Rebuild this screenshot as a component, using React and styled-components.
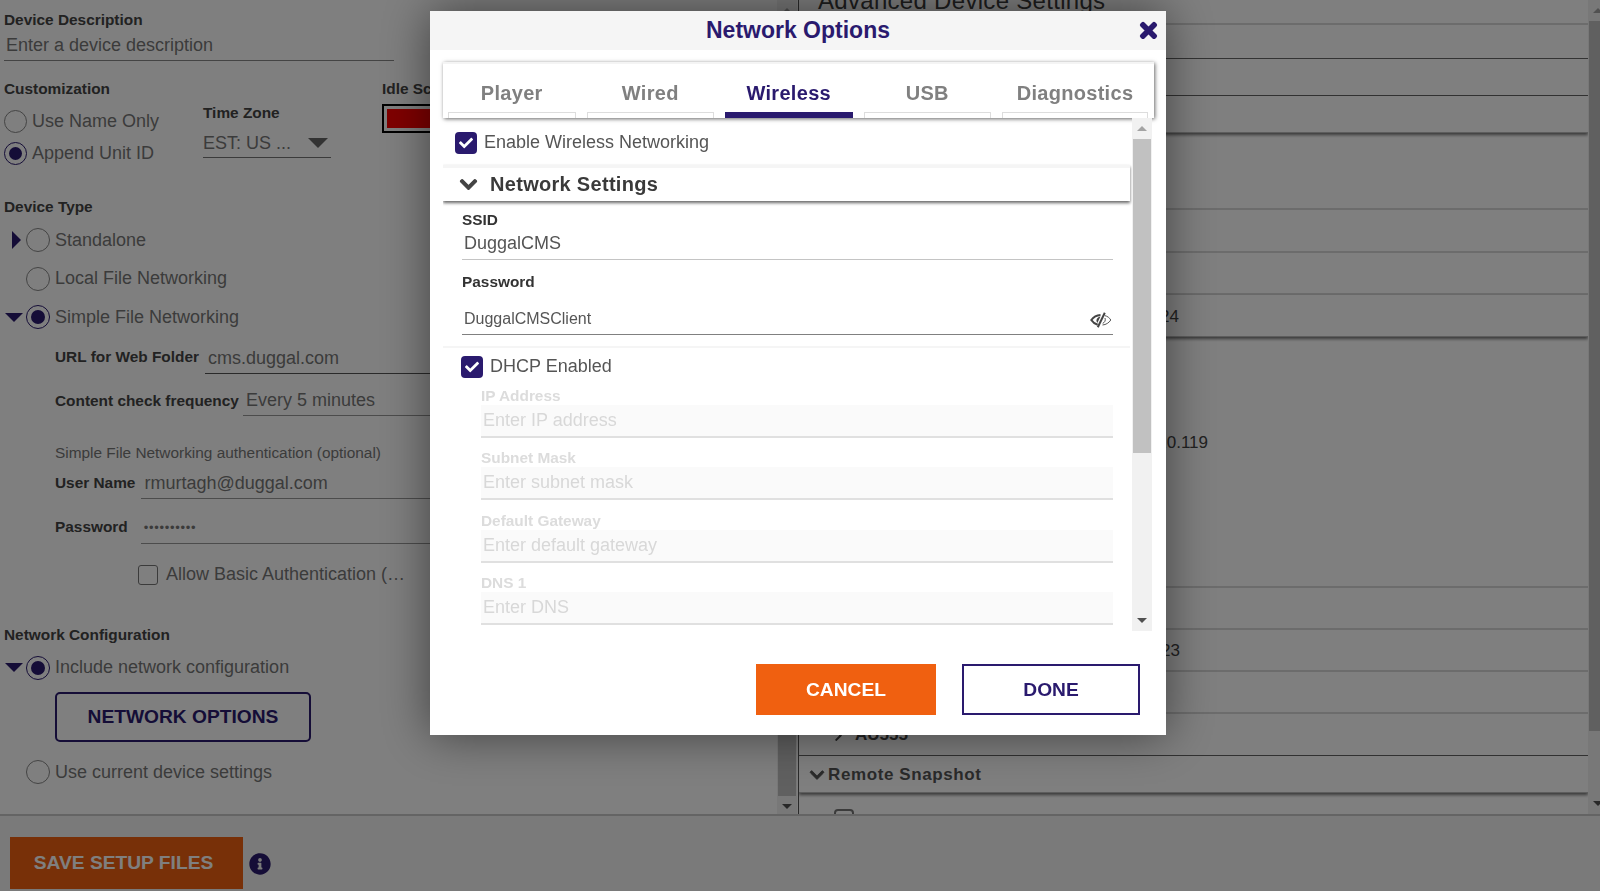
import React from 'react'
import styled, { createGlobalStyle, css } from 'styled-components'
import { FaCheck, FaChevronDown, FaChevronRight, FaInfoCircle, FaTimes } from 'react-icons/fa'

const navy = '#2a1a6e'

const GlobalStyle = createGlobalStyle`
  html, body {
    margin: 0;
    height: 100%;
    overflow: hidden;
    background: #fff;
    font-family: "Liberation Sans", Arial, sans-serif;
  }
  * { box-sizing: border-box; }
`

function Scrollbar({ thumbHeight }) {
    return (
        <Track>
            <ArrowCell><UpArrow /></ArrowCell>
            <Thumb $height={thumbHeight} />
            <TrackRest />
            <ArrowCell><DownArrow /></ArrowCell>
        </Track>
    )
}

function RadioRow({ checked, caret, label, compact }) {
    return (
        <RadioLine $compact={compact}>
            {!compact && <CaretCell>{caret === 'right' && <CaretRight />}{caret === 'down' && <CaretDown />}</CaretCell>}
            <Radio $checked={checked} $compact={compact} />
            <RadioText>{label}</RadioText>
        </RadioLine>
    )
}

function EyeSlash() {
    return (
        <EyeIcon viewBox="0 0 22 16" fill="none">
            <path d="M10.500 3C6.500 3.200 3.300 5.200 1.300 8c1.400 2.200 3.600 3.900 6.400 4.800" stroke="#444" strokeWidth="2" />
            <path d="M10.500 4.500C8 5 6.500 6.500 6.500 8.500c0 1 .3 1.800.8 2.500z" fill="#444" />
            <path d="M14.800 .8 7.800 15.200" stroke="#444" strokeWidth="2" />
            <path d="M14.800 3.600c2.700.6 4.700 2.200 6 4.400-1.900 2.900-4.800 4.700-8.300 5" stroke="#555" strokeWidth="1" />
            <path d="M15 6c.8 2.400-.2 4.500-2.300 5.300" stroke="#555" strokeWidth="1" />
        </EyeIcon>
    )
}

function DisabledField({ label, placeholder }) {
    return (
        <DisabledBlock>
            <DisabledLabel>{label}</DisabledLabel>
            <DisabledInput>{placeholder}</DisabledInput>
        </DisabledBlock>
    )
}

const rightRows = [
    { height: 39, line: 'light', heading: 'Advanced Device Settings' },
    { height: 34, line: 'dark' },
    { height: 37, line: 'dark' },
    { height: 37, line: 'shadow' },
    { height: 77, line: 'light' },
    { height: 43, line: 'light' },
    { height: 42, line: 'light' },
    { height: 42, line: 'shadow', value: '8.5.24', valueWidth: 380 },
    { height: 251, line: 'light', value: '192.168.10.119', valueWidth: 409, valueTop: 96 },
    { height: 42, line: 'light' },
    { height: 42, line: 'light', value: '8.0.123', valueWidth: 381, valueTop: 11 },
    { height: 42, line: 'light' },
    { height: 42, line: 'dark', sub: 'AU555' },
    { height: 37, line: 'shadow', section: 'Remote Snapshot' },
]

export default function App() {
    return (
        <>
            <GlobalStyle />
            <Page>
                <Main>
                    <LeftPane>
                        <LeftContent>
                            <Label $top={11}>Device Description</Label>
                            <TextInput $width={390}>Enter a device description</TextInput>

                            <CustomRow>
                                <CustomCol>
                                    <Label>Customization</Label>
                                    <RadioStack>
                                        <RadioRow compact label="Use Name Only" />
                                        <RadioRow compact checked label="Append Unit ID" />
                                    </RadioStack>
                                </CustomCol>
                                <ZoneCol>
                                    <Label>Time Zone</Label>
                                    <ZoneSelect>EST: US ...<SelectCaret /></ZoneSelect>
                                </ZoneCol>
                                <IdleCol>
                                    <IdleLabel>Idle Screen Color</IdleLabel>
                                    <Swatch />
                                </IdleCol>
                            </CustomRow>

                            <Label $top={28}>Device Type</Label>
                            <RadioStack $top={5}>
                                <RadioRow caret="right" label="Standalone" />
                                <RadioRow label="Local File Networking" />
                                <RadioRow checked caret="down" label="Simple File Networking" />
                            </RadioStack>

                            <FieldRow $top={6}>
                                <FieldLabel>URL for Web Folder</FieldLabel>
                                <FieldValue $dark $gap={6}>cms.duggal.com</FieldValue>
                            </FieldRow>
                            <FieldRow $top={11}>
                                <FieldLabel $shift={2}>Content check frequency</FieldLabel>
                                <FieldValue $gap={4}>Every 5 minutes</FieldValue>
                            </FieldRow>
                            <AuthNote>Simple File Networking authentication (optional)</AuthNote>
                            <FieldRow $top={5}>
                                <FieldLabel $shift={1}>User Name</FieldLabel>
                                <FieldValue $gap={6}>rmurtagh@duggal.com</FieldValue>
                            </FieldRow>
                            <FieldRow $top={14}>
                                <FieldLabel>Password</FieldLabel>
                                <FieldValue $gap={13} $dots>••••••••••</FieldValue>
                            </FieldRow>
                            <BasicAuth>
                                <EmptyBox />
                                <RadioText>Allow Basic Authentication (…</RadioText>
                            </BasicAuth>

                            <Label $top={40}>Network Configuration</Label>
                            <RadioStack $top={5}>
                                <RadioRow checked caret="down" label="Include network configuration" />
                            </RadioStack>
                            <NetworkButton>NETWORK OPTIONS</NetworkButton>
                            <RadioStack $top={11}>
                                <RadioRow label="Use current device settings" />
                            </RadioStack>
                        </LeftContent>
                        <Scrollbar thumbHeight={775} />
                    </LeftPane>

                    <RightPane>
                        <RightContent>
                            {rightRows.map((row, i) => (
                                <RightRow key={i} $height={row.height} $line={row.line}>
                                    {row.heading && <RightHeading>{row.heading}</RightHeading>}
                                    {row.value && <RowValue $top={row.valueTop} $width={row.valueWidth}>{row.value}</RowValue>}
                                    {row.sub && <SubRow><FaChevronRight size={13} />{row.sub}</SubRow>}
                                    {row.section && <SectionRow><FaChevronDown size={16} stroke="currentColor" strokeWidth={30} />{row.section}</SectionRow>}
                                </RightRow>
                            ))}
                            <PeekBox />
                        </RightContent>
                        <Scrollbar thumbHeight={710} />
                    </RightPane>
                </Main>
                <Footer>
                    <SaveButton>SAVE SETUP FILES</SaveButton>
                    <InfoIcon><FaInfoCircle size={22} /></InfoIcon>
                </Footer>
            </Page>

            <Backdrop>
                <Modal>
                    <ModalHeader>
                        <ModalTitle>Network Options</ModalTitle>
                        <CloseIcon><FaTimes size={23} stroke="currentColor" strokeWidth={30} /></CloseIcon>
                    </ModalHeader>
                    <TabBar>
                        <Tab>Player</Tab>
                        <Tab>Wired</Tab>
                        <Tab $active>Wireless</Tab>
                        <Tab>USB</Tab>
                        <Tab $wide>Diagnostics</Tab>
                    </TabBar>
                    <ScrollArea>
                        <ScrollBody>
                            <CheckRow $left={12} $height={47}>
                                <CheckBox><FaCheck size={14} /></CheckBox>
                                Enable Wireless Networking
                            </CheckRow>
                            <SettingsHeader>
                                <FaChevronDown size={19} stroke="currentColor" strokeWidth={30} />
                                <span>Network Settings</span>
                            </SettingsHeader>
                            <FormBlock>
                                <SmallLabel $top={11}>SSID</SmallLabel>
                                <WifiInput $line="#c4c4c4" $height={32}>DuggalCMS</WifiInput>
                                <SmallLabel $top={14}>Password</SmallLabel>
                                <WifiInput $line="#808080" $height={45} $small>
                                    DuggalCMSClient
                                    <EyeSlash />
                                </WifiInput>
                            </FormBlock>
                            <Rule />
                            <CheckRow $left={18} $height={35}>
                                <CheckBox><FaCheck size={14} /></CheckBox>
                                DHCP Enabled
                            </CheckRow>
                            <DisabledField label="IP Address" placeholder="Enter IP address" />
                            <DisabledField label="Subnet Mask" placeholder="Enter subnet mask" />
                            <DisabledField label="Default Gateway" placeholder="Enter default gateway" />
                            <DisabledField label="DNS 1" placeholder="Enter DNS" />
                        </ScrollBody>
                        <Scrollbar thumbHeight={314} />
                    </ScrollArea>
                    <ModalActions>
                        <CancelButton>CANCEL</CancelButton>
                        <DoneButton>DONE</DoneButton>
                    </ModalActions>
                </Modal>
            </Backdrop>
        </>
    )
}

const Page = styled.div`
    width: 1608px;
    height: 891px;
    display: flex;
    flex-direction: column;
    background: #fff;
    color: #777;
`
const Main = styled.div`
    height: 816px;
    display: flex;
    border-bottom: 2px solid #c8c8c8;
`
const LeftPane = styled.div`
    width: 799px;
    display: flex;
    border-right: 1px solid #555;
`
const LeftContent = styled.div`
    width: 777px;
    padding-left: 4px;
    overflow: hidden;
`
const RightPane = styled.div`
    flex: 1;
    display: flex;
    min-width: 0;
`
const RightContent = styled.div`
    width: 791px;
    overflow: hidden;
    margin-top: -14px;
`
const RightRow = styled.div`
    position: relative;
    height: ${p => p.$height}px;
    ${p => p.$line === 'light' && css`border-bottom: 2px solid #d8d8d8;`}
    ${p => p.$line === 'dark' && css`border-bottom: 1px solid #666;`}
    ${p => p.$line === 'shadow' && css`
        border-bottom: 1px solid #bbb;
        box-shadow: 0 2px 3px rgba(0, 0, 0, .55);
    `}
`
const RightHeading = styled.div`
    padding: 1px 0 0 19px;
    font-size: 24px;
    letter-spacing: .3px;
    color: #3c3c3c;
`
const RowValue = styled.div`
    width: ${p => p.$width}px;
    padding-top: ${p => (p.$top ? p.$top : 12)}px;
    text-align: right;
    font-size: 17px;
    color: #444;
`
const SubRow = styled.div`
    display: flex;
    align-items: center;
    gap: 10px;
    padding: 11px 0 0 33px;
    font-size: 17px;
    font-weight: 700;
    color: #444;
`
const SectionRow = styled.div`
    display: flex;
    align-items: center;
    gap: 3px;
    padding: 9px 0 0 10px;
    font-size: 17px;
    font-weight: 700;
    letter-spacing: .6px;
    color: #555;
`
const PeekBox = styled.div`
    width: 20px;
    height: 18px;
    margin: 16px 0 0 35px;
    border: 2px solid #777;
    border-radius: 4px;
`

const Track = styled.div`
    width: 20px;
    flex-shrink: 0;
    display: flex;
    flex-direction: column;
    align-items: center;
    background: #f1f1f1;
`
const ArrowCell = styled.div`
    height: 21px;
    flex-shrink: 0;
    display: flex;
    align-items: center;
    justify-content: center;
`
const UpArrow = styled.div`
    border-left: 5px solid transparent;
    border-right: 5px solid transparent;
    border-bottom: 5px solid #a3a3a3;
`
const DownArrow = styled.div`
    border-left: 5px solid transparent;
    border-right: 5px solid transparent;
    border-top: 5px solid #505050;
`
const Thumb = styled.div`
    width: 18px;
    height: ${p => p.$height}px;
    flex-shrink: 0;
    background: #c1c1c1;
`
const TrackRest = styled.div`flex: 1;`

const Label = styled.div`
    margin-top: ${p => p.$top || 0}px;
    height: 18px;
    line-height: 18px;
    font-size: 15.400px;
    font-weight: 700;
    color: #444;
`
const TextInput = styled.div`
    width: ${p => p.$width}px;
    height: 32px;
    padding: 6px 0 0 2px;
    font-size: 18px;
    line-height: 21px;
    border-bottom: 1px solid #888;
`
const CustomRow = styled.div`
    display: flex;
    margin-top: 19px;
`
const CustomCol = styled.div`
    width: 199px;
`
const ZoneCol = styled.div`
    width: 128px;
    margin-top: 24px;
`
const ZoneSelect = styled.div`
    position: relative;
    height: 27px;
    margin-top: 9px;
    padding-top: 2px;
    font-size: 18px;
    border-bottom: 1px solid #777;
`
const SelectCaret = styled.i`
    position: absolute;
    right: 3px;
    top: 7px;
    border-left: 10px solid transparent;
    border-right: 10px solid transparent;
    border-top: 10px solid #666;
`
const IdleCol = styled.div`
    margin-left: 51px;
`
const IdleLabel = styled(Label)`
    white-space: nowrap;
`
const Swatch = styled.div`
    width: 120px;
    height: 29px;
    margin-top: 6px;
    border: 2px solid #000;
    padding: 3px;
    background: #fff;
    &::before {
        content: '';
        display: block;
        height: 100%;
        background: #ff0000;
    }
`
const RadioStack = styled.div`
    margin-top: ${p => p.$top || 7}px;
`
const RadioLine = styled.div`
    display: flex;
    align-items: center;
    height: ${p => (p.$compact ? 32.500 : 38.500)}px;
`
const CaretCell = styled.div`
    width: 22px;
    display: flex;
    justify-content: center;
`
const CaretRight = styled.i`
    margin-left: 2px;
    border-top: 9px solid transparent;
    border-bottom: 9px solid transparent;
    border-left: 9px solid ${navy};
`
const CaretDown = styled.i`
    margin-right: 2px;
    border-left: 9px solid transparent;
    border-right: 9px solid transparent;
    border-top: 9px solid ${navy};
`
const Radio = styled.span`
    position: relative;
    flex-shrink: 0;
    width: ${p => (p.$compact ? 23 : 24)}px;
    height: ${p => (p.$compact ? 23 : 24)}px;
    margin-right: 5px;
    border-radius: 50%;
    border: 1px solid ${p => (p.$checked ? navy : '#888')};
    ${p => p.$checked && css`
        &::after {
            content: '';
            position: absolute;
            inset: 4px;
            border-radius: 50%;
            background: ${navy};
        }
    `}
`
const RadioText = styled.span`
    font-size: 18px;
    white-space: nowrap;
`
const FieldRow = styled.div`
    display: flex;
    align-items: flex-end;
    margin-top: ${p => p.$top}px;
    padding-left: 51px;
`
const FieldLabel = styled.div`
    font-size: 15.400px;
    font-weight: 700;
    line-height: 20px;
    color: #444;
    white-space: nowrap;
    padding-bottom: ${p => 7 - (p.$shift || 0)}px;
`
const FieldValue = styled.div`
    flex: 1;
    height: 31px;
    margin-left: ${p => p.$gap}px;
    padding: 5px 0 0 3px;
    font-size: 18px;
    line-height: 21px;
    border-bottom: 1px solid ${p => (p.$dark ? '#555' : '#999')};
    ${p => p.$dots && css`
        padding-top: 4px;
        font-size: 13px;
        letter-spacing: .7px;
    `}
`
const AuthNote = styled.div`
    margin: 27px 0 0 51px;
    font-size: 15.400px;
    line-height: 20px;
`
const BasicAuth = styled.div`
    display: flex;
    align-items: center;
    gap: 8px;
    height: 22px;
    margin: 20px 0 0 134px;
`
const EmptyBox = styled.span`
    width: 20px;
    height: 20px;
    border: 1px solid #777;
    border-radius: 3px;
`
const NetworkButton = styled.div`
    width: 256px;
    height: 50px;
    margin: 5px 0 0 51px;
    padding-bottom: 1px;
    display: flex;
    align-items: center;
    justify-content: center;
    border: 2px solid ${navy};
    border-radius: 5px;
    color: ${navy};
    font-size: 19.200px;
    font-weight: 700;
`
const Footer = styled.div`
    flex: 1;
    display: flex;
    align-items: flex-start;
    padding: 21px 0 0 10px;
    background: #f4f4f4;
`
const SaveButton = styled.div`
    width: 233px;
    height: 52px;
    display: flex;
    align-items: center;
    justify-content: center;
    padding: 0 6px 1px 0;
    background: #f06010;
    color: #fff;
    font-size: 19.200px;
    font-weight: 700;
`
const InfoIcon = styled.div`
    display: flex;
    margin: 16px 0 0 6px;
    color: ${navy};
`

const Backdrop = styled.div`
    position: fixed;
    inset: 0;
    display: flex;
    justify-content: center;
    padding: 11px 4px 0 0;
    background: rgba(0, 0, 0, .5);
`
const Modal = styled.div`
    width: 736px;
    height: 724px;
    display: flex;
    flex-direction: column;
    background: #fff;
    box-shadow: 0 0 45px rgba(0, 0, 0, .5);
`
const ModalHeader = styled.div`
    position: relative;
    height: 39px;
    flex-shrink: 0;
    display: flex;
    align-items: center;
    justify-content: center;
    background: #f5f5f5;
`
const ModalTitle = styled.div`
    font-size: 23px;
    font-weight: 700;
    color: ${navy};
`
const CloseIcon = styled.div`
    position: absolute;
    right: 6px;
    top: 8px;
    display: flex;
    color: ${navy};
`
const TabBar = styled.div`
    height: 56px;
    flex-shrink: 0;
    margin: 12px 12px 0 13px;
    padding: 0 5px;
    display: flex;
    gap: 11px;
    box-shadow: 1px 1px 4px rgba(0, 0, 0, .6);
    border-top: 2px solid #f4f4f4;
`
const Tab = styled.div`
    width: ${p => (p.$wide ? 146 : 127.500)}px;
    height: 54px;
    padding-top: 18px;
    text-align: center;
    font-size: 20px;
    font-weight: 700;
    letter-spacing: .3px;
    color: ${p => (p.$active ? navy : '#808080')};
    border-bottom: ${p => (p.$active ? `6px solid ${navy}` : 'none')};
    position: relative;
    ${p => !p.$active && css`
        &::after {
            content: '';
            position: absolute;
            left: 0;
            right: 0;
            bottom: 0;
            height: 5px;
            border: 1px solid #ddd;
            border-bottom: none;
            background: #fff;
        }
    `}
`
const ScrollArea = styled.div`
    height: 513px;
    flex-shrink: 0;
    display: flex;
    margin: 0 14px 0 13px;
`
const ScrollBody = styled.div`
    flex: 1;
    overflow: hidden;
    padding-right: 2px;
`
const CheckRow = styled.div`
    display: flex;
    align-items: center;
    gap: 7px;
    height: ${p => p.$height}px;
    padding: 2px 0 0 ${p => p.$left}px;
    font-size: 18px;
    color: #555;
`
const CheckBox = styled.span`
    width: 22px;
    height: 22px;
    display: flex;
    align-items: center;
    justify-content: center;
    flex-shrink: 0;
    border-radius: 4px;
    background: ${navy};
    color: #fff;
`
const SettingsHeader = styled.div`
    height: 36px;
    display: flex;
    align-items: center;
    gap: 12px;
    padding-left: 16px;
    border-top: 3px solid #f5f5f5;
    font-size: 20px;
    font-weight: 700;
    letter-spacing: .3px;
    color: #3a3a3a;
    box-shadow: 0 2px 3px rgba(0, 0, 0, .6);
    svg { color: #444; }
`
const FormBlock = styled.div`
    padding: 0 17px 0 19px;
`
const SmallLabel = styled.div`
    margin-top: ${p => p.$top}px;
    height: 16px;
    line-height: 16px;
    font-size: 15.400px;
    font-weight: 700;
    color: #333;
`
const WifiInput = styled.div`
    position: relative;
    height: ${p => p.$height}px;
    display: flex;
    align-items: flex-end;
    justify-content: space-between;
    padding: 0 2px ${p => (p.$small ? 6 : 5)}px 2px;
    font-size: ${p => (p.$small ? 16 : 18)}px;
    color: #555;
    border-bottom: 1px solid ${p => p.$line};
`
const EyeIcon = styled.svg`
    width: 22px;
    height: 16px;
    margin-right: -1px;
`
const Rule = styled.div`
    height: 2px;
    margin-top: 11px;
    background: #f5f5f5;
`
const DisabledBlock = styled.div`
    padding: 3px 17px 0 38px;
    margin-bottom: 7.300px;
`
const DisabledLabel = styled.div`
    height: 19px;
    line-height: 19px;
    font-size: 15.400px;
    font-weight: 700;
    color: #dcdcdc;
`
const DisabledInput = styled.div`
    height: 33px;
    padding: 5px 0 0 2px;
    font-size: 18px;
    background: #fafafa;
    color: #d8d8d8;
    border-bottom: 2px solid #e0e0e0;
`
const ModalActions = styled.div`
    flex: 1;
    display: flex;
    justify-content: flex-end;
    gap: 26px;
    padding: 33px 26px 0 0;
`
const CancelButton = styled.div`
    width: 180px;
    height: 51px;
    display: flex;
    align-items: center;
    justify-content: center;
    background: #f06010;
    color: #fff;
    font-size: 19.200px;
    font-weight: 700;
`
const DoneButton = styled(CancelButton)`
    width: 178px;
    background: #fff;
    color: ${navy};
    border: 2px solid ${navy};
`
